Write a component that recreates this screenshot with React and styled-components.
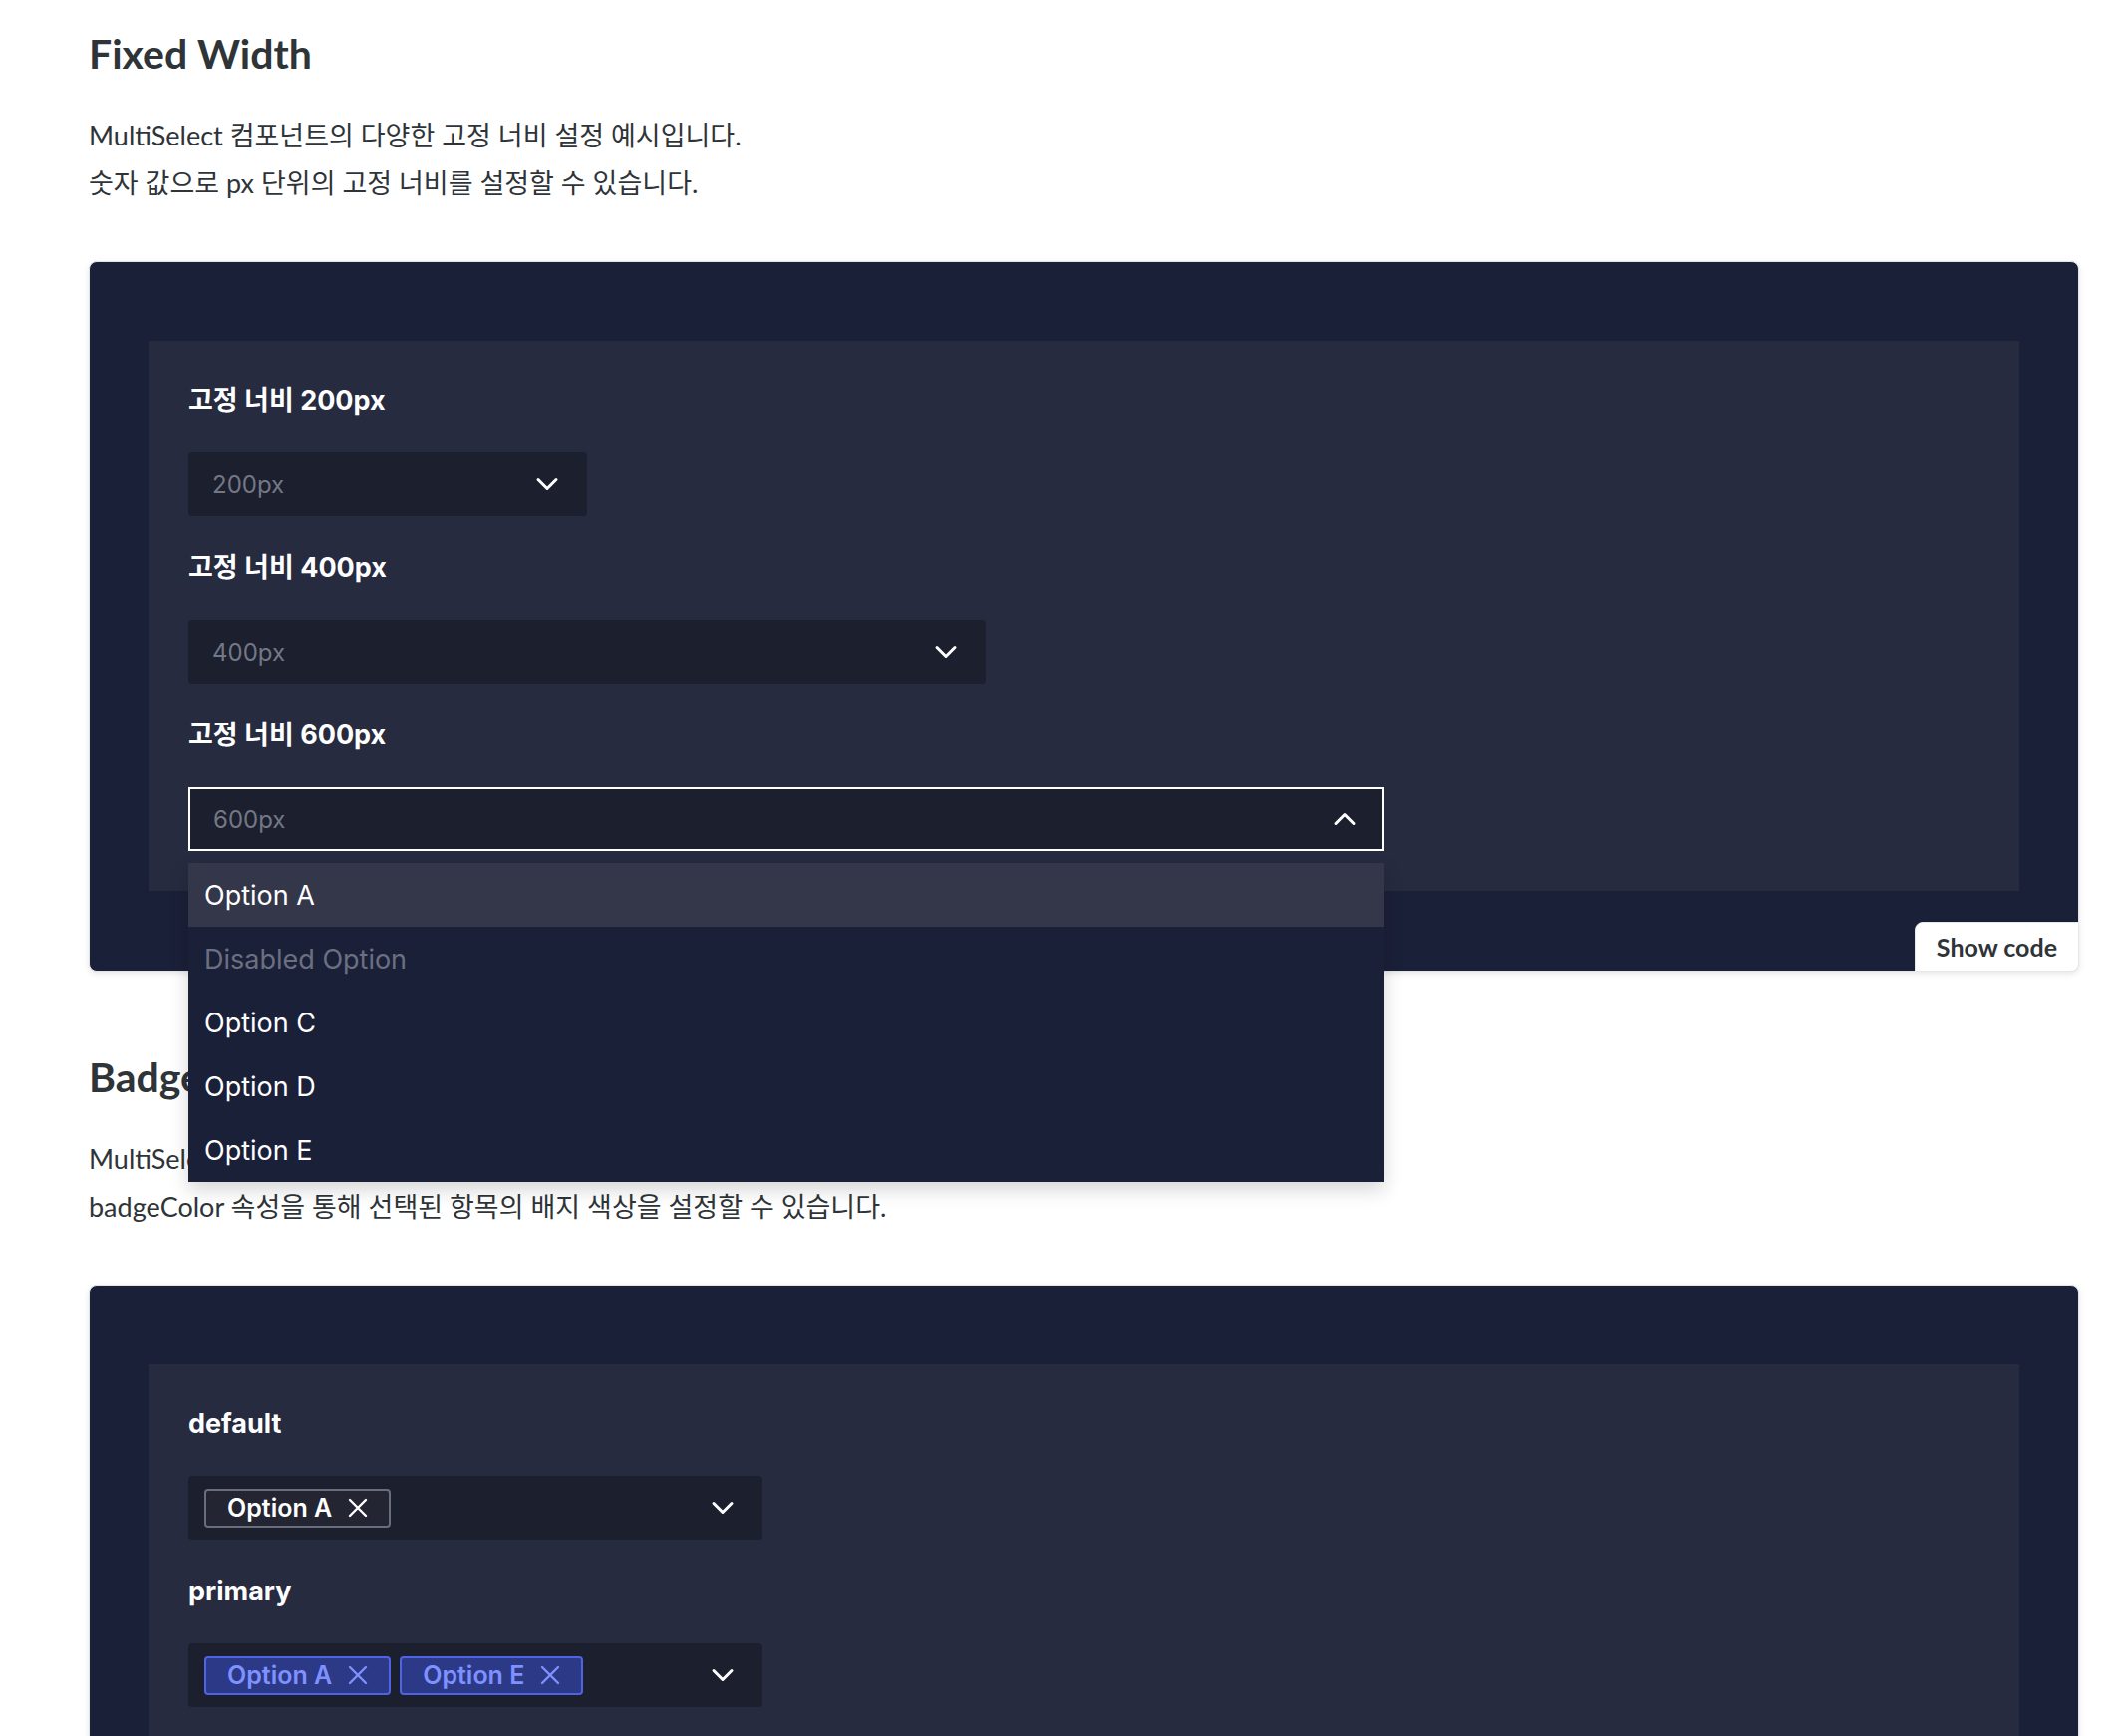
import React from 'react';
import styled, { createGlobalStyle } from 'styled-components';
import { ChevronDown, ChevronUp } from 'lucide-react';

const GlobalStyle = createGlobalStyle`
    body {
        margin: 0;
        background: #ffffff;
        font-family: "Lato", "Noto Sans CJK KR", sans-serif;
    }
`;

const Page = styled.div`
    padding: 26px 40px 0 89px;
`;

const Section = styled.section`
    margin-bottom: 78px;
`;

const Title = styled.h2`
    margin: 0 0 30px;
    font-size: 41px;
    line-height: 56px;
    font-weight: 700;
    color: #2e3438;
`;

const Desc = styled.p`
    margin: 0 0 54px;
    font-size: 27px;
    line-height: 48px;
    color: #2e3438;
`;

const Preview = styled.div`
    position: relative;
    background: #1b2039;
    border: 1px solid #dfe5ea;
    border-radius: 8px;
    box-shadow: rgba(0, 0, 0, 0.1) 0 2px 6px 0;
    padding: 79px 59px 80px;
`;

const Panel = styled.div`
    background: #262b3f;
    padding: 40px;
    display: flex;
    flex-direction: column;
    gap: 32px;
`;

const Field = styled.div`
    display: flex;
    flex-direction: column;
    gap: 32px;
`;

const Label = styled.div`
    font-family: "Inter", "Noto Sans CJK KR", sans-serif;
    font-size: 27px;
    line-height: 40px;
    font-weight: 700;
    color: #ffffff;
`;

const SelectWrap = styled.div`
    position: relative;
    width: ${p => p.width}px;
`;

const SelectBox = styled.div`
    box-sizing: border-box;
    height: 64px;
    display: flex;
    align-items: center;
    gap: 10px;
    background: #1c1f2d;
    border-radius: ${p => (p.open ? '0' : '4px')};
    border: ${p => (p.open ? '2px solid #ffffff' : 'none')};
    padding: ${p => (p.open ? '0 20px 0 17px' : p.badges ? '0 22px 0 16px' : '0 22px 0 18px')};
    color: #fff;
`;

const Placeholder = styled.span`
    flex: 1;
    padding-left: 6px;
    font-family: "Inter", sans-serif;
    font-size: 24px;
    color: #747886;
`;

const Badges = styled.div`
    flex: 1;
    display: flex;
    gap: 9px;
`;

const Badge = styled.span`
    box-sizing: border-box;
    height: 39px;
    display: inline-flex;
    align-items: center;
    gap: 15px;
    padding: 0 20px 0 21px;
    border-radius: 4px;
    font-family: "Inter", sans-serif;
    font-size: 25px;
    font-weight: 600;
    border: 2px solid ${p => (p.tone === 'primary' ? '#4f63e6' : '#6a6e7a')};
    background: ${p => (p.tone === 'primary' ? '#2c3987' : '#232632')};
    color: ${p => (p.tone === 'primary' ? '#7f91ff' : '#ffffff')};
`;

const Menu = styled.div`
    position: absolute;
    top: calc(100% + 12px);
    left: 0;
    right: 0;
    z-index: 10;
    background: #1b2039;
    box-shadow: 0 8px 18px rgba(0, 0, 0, 0.16);
`;

const MenuItem = styled.div`
    height: 64px;
    display: flex;
    align-items: center;
    padding: 0 16px;
    font-family: "Inter", sans-serif;
    font-size: 27px;
    color: ${p => (p.disabled ? '#6b7081' : '#ffffff')};
    background: ${p => (p.active ? '#333749' : 'transparent')};
`;

const ShowCode = styled.button`
    position: absolute;
    right: -1px;
    bottom: -1px;
    height: 50px;
    padding: 0 21px;
    background: #ffffff;
    border: 1px solid #e3e8ec;
    border-radius: 8px 0 8px 0;
    font-family: "Lato", sans-serif;
    font-size: 25px;
    font-weight: 700;
    color: #2e3438;
`;

const options = ['Option A', 'Disabled Option', 'Option C', 'Option D', 'Option E'];

function XMark() {
    return (
        <svg width="22" height="22" viewBox="0 0 22 22" fill="none" stroke="currentColor" strokeWidth="2.4" strokeLinecap="round">
            <path d="M3 3 L19 19 M19 3 L3 19" />
        </svg>
    );
}

function FixedSelect({ width, placeholder, open }) {
    return (
        <SelectWrap width={width}>
            <SelectBox open={open}>
                <Placeholder>{placeholder}</Placeholder>
                {open ? <ChevronUp size={36} strokeWidth={2} /> : <ChevronDown size={36} strokeWidth={2} />}
            </SelectBox>
            {open && (
                <Menu>
                    {options.map((o, i) => (
                        <MenuItem key={o} active={i === 0} disabled={o === 'Disabled Option'}>{o}</MenuItem>
                    ))}
                </Menu>
            )}
        </SelectWrap>
    );
}

function BadgeSelect({ tone, values }) {
    return (
        <SelectWrap width={576}>
            <SelectBox badges>
                <Badges>
                    {values.map(v => (
                        <Badge key={v} tone={tone}>{v}<XMark /></Badge>
                    ))}
                </Badges>
                <ChevronDown size={36} strokeWidth={2} />
            </SelectBox>
        </SelectWrap>
    );
}

const badgeRows = [
    { tone: 'default', values: ['Option A'] },
    { tone: 'primary', values: ['Option A', 'Option E'] },
    { tone: 'secondary', values: ['Option C'] },
    { tone: 'success', values: ['Option D'] },
];

export default function App() {
    return (
        <Page>
            <GlobalStyle />
            <Section>
                <Title>Fixed Width</Title>
                <Desc>
                    MultiSelect 컴포넌트의 다양한 고정 너비 설정 예시입니다.<br />
                    숫자 값으로 px 단위의 고정 너비를 설정할 수 있습니다.
                </Desc>
                <Preview>
                    <Panel>
                        <Field>
                            <Label>고정 너비 200px</Label>
                            <FixedSelect width={400} placeholder="200px" />
                        </Field>
                        <Field>
                            <Label>고정 너비 400px</Label>
                            <FixedSelect width={800} placeholder="400px" />
                        </Field>
                        <Field>
                            <Label>고정 너비 600px</Label>
                            <FixedSelect width={1200} placeholder="600px" open />
                        </Field>
                    </Panel>
                    <ShowCode>Show code</ShowCode>
                </Preview>
            </Section>
            <Section>
                <Title>Badge Color</Title>
                <Desc>
                    MultiSelect 컴포넌트의 배지 색상 설정 예시입니다.<br />
                    badgeColor 속성을 통해 선택된 항목의 배지 색상을 설정할 수 있습니다.
                </Desc>
                <Preview>
                    <Panel>
                        {badgeRows.map(r => (
                            <Field key={r.tone}>
                                <Label>{r.tone}</Label>
                                <BadgeSelect tone={r.tone} values={r.values} />
                            </Field>
                        ))}
                    </Panel>
                    <ShowCode>Show code</ShowCode>
                </Preview>
            </Section>
        </Page>
    );
}
